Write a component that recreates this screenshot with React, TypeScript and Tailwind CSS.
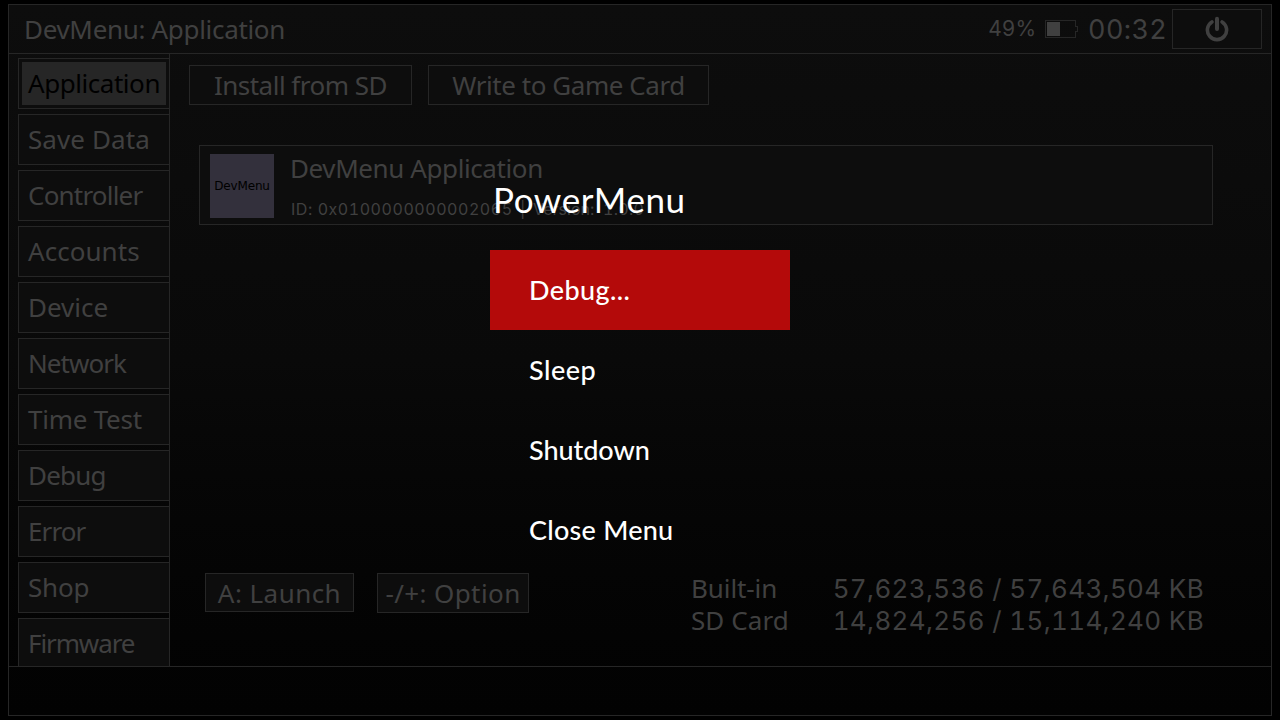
const LETTERS = "font-['Noto_Sans',sans-serif]";
const DIGITS = "font-['Inter',sans-serif] tabular-nums";
const MENU = "font-['Lato',sans-serif]";

const tabs = [
  { label: "Application", spacing: "tracking-[-0.45px]" },
  { label: "Save Data", spacing: "tracking-[0.1px]" },
  { label: "Controller", spacing: "tracking-[-0.8px]" },
  { label: "Accounts", spacing: "tracking-[0.05px]" },
  { label: "Device", spacing: "tracking-[0px]" },
  { label: "Network", spacing: "tracking-[-0.95px]" },
  { label: "Time Test", spacing: "tracking-[-0.25px]" },
  { label: "Debug", spacing: "tracking-[-0.8px]" },
  { label: "Error", spacing: "tracking-[-0.9px]" },
  { label: "Shop", spacing: "tracking-[-0.2px]" },
  { label: "Firmware", spacing: "tracking-[-1.1px]" },
];

const storage = [
  { name: "Built-in", used: "57,623,536 / 57,643,504 KB", spacing: "tracking-[-0.1px]" },
  { name: "SD Card", used: "14,824,256 / 15,114,240 KB", spacing: "tracking-[0.1px]" },
];

const menuItems = [
  { label: "Debug...", spacing: "tracking-[0.4px]" },
  { label: "Sleep", spacing: "tracking-[0.5px]" },
  { label: "Shutdown", spacing: "tracking-[-0.05px]" },
  { label: "Close Menu", spacing: "tracking-[0.25px]" },
];

function Battery() {
  return (
    <svg width="34" height="18" viewBox="0 0 34 18" fill="none" shapeRendering="crispEdges">
      <path d="M0.5 0.5H30.5V6.5H32.5V11.5H30.5V17.5H0.5Z" stroke="#262626" />
      <rect x="2" y="2" width="13" height="14" fill="#404040" />
    </svg>
  );
}

function PowerIcon() {
  return (
    <svg width="24" height="26" viewBox="0 0 24 26" fill="none" stroke="#404040">
      <path d="M6.9 5.9A9.6 9.6 0 1 0 17.1 5.9" strokeWidth="3.6" strokeLinecap="round" />
      <path d="M12 2.8V13" strokeWidth="4" strokeLinecap="round" />
    </svg>
  );
}

function Header() {
  return (
    <header className="flex h-[49px] shrink-0 items-center border-b border-[#262626] pr-[9px] pl-[15px]">
      <h1 className="flex-1 text-[26px] leading-[48px] tracking-[-0.32px]">DevMenu: Application</h1>
      <span className={`${DIGITS} mr-[9px] text-[21px] leading-[40px]`}>49%</span>
      <Battery />
      <span className={`${DIGITS} mt-px ml-[9px] w-[84px] text-[27px] leading-[48px] tracking-[0.4px]`}>00:32</span>
      <button className="flex h-10 w-[90px] items-center justify-center border border-[#262626] bg-[#0d0d0d]">
        <PowerIcon />
      </button>
    </header>
  );
}

function Sidebar() {
  return (
    <nav className="flex w-[161px] shrink-0 flex-col gap-[5px] overflow-hidden border-r border-[#262626] pt-1 pl-[9px]">
      {tabs.map((tab, i) => (
        <div key={tab.label} className="h-[51px] shrink-0 border border-r-0 border-[#262626] bg-[#0d0d0d] p-[3px]">
          <div
            className={`h-[43px] w-36 pl-[6px] text-[26px] leading-[43px] whitespace-nowrap ${tab.spacing} ${
              i === 0 ? "bg-[#262626] text-black" : ""
            }`}
          >
            {tab.label}
          </div>
        </div>
      ))}
    </nav>
  );
}

function ApplicationRow() {
  return (
    <div className="mt-10 ml-[10px] flex h-20 w-[1014px] border border-[#262626] bg-[#0d0d0d] pt-2 pl-[10px]">
      <div className="flex h-16 w-16 items-center justify-center bg-[#33303c] font-['DejaVu_Sans',sans-serif] text-[12px] leading-none tracking-[-0.15px] text-black">
        DevMenu
      </div>
      <div className="pl-[16px]">
        <div className="h-8 text-[26px] leading-[29px] tracking-[-0.4px]">DevMenu Application</div>
        <div className={`${DIGITS} flex pt-[3px] pl-px text-[16px] leading-[40px] whitespace-nowrap`}>
          <span className="w-[229px] tracking-[0.55px]">ID: 0x0100000000002065</span>
          <span className="w-[13px]">|</span>
          <span className="w-[70px]">Version:</span>
          <span className="tracking-[0.3px]">1.0.0</span>
        </div>
      </div>
    </div>
  );
}

function Content() {
  return (
    <main className="flex flex-1 flex-col pt-[11px] pl-[19px]">
      <div className="flex gap-4 text-[26px] leading-[39px]">
        <button className="h-10 w-[223px] border border-[#262626] bg-[#0d0d0d] tracking-[-0.5px]">Install from SD</button>
        <button className="h-10 w-[281px] border border-[#262626] bg-[#0d0d0d] tracking-[-0.45px]">Write to Game Card</button>
      </div>
      <ApplicationRow />
      <div className="mt-auto flex h-[93px] pl-4 text-[26px]">
        <button className="h-[39px] w-[149px] border border-[#262626] bg-[#0d0d0d] leading-[38px] tracking-[0.45px]">
          A: Launch
        </button>
        <button className="ml-[23px] h-10 w-[152px] border border-[#262626] bg-[#0d0d0d] leading-[38px] tracking-[0.4px]">
          -/+: Option
        </button>
        <div className="ml-[161px] leading-8">
          {storage.map((s) => (
            <div key={s.name} className="flex h-8">
              <span className={`w-[142px] pl-px leading-[31px] ${s.spacing}`}>{s.name}</span>
              <span className={`${DIGITS} w-[372px] text-right tracking-[0.34px] whitespace-nowrap`}>{s.used}</span>
            </div>
          ))}
        </div>
      </div>
    </main>
  );
}

function PowerMenu() {
  return (
    <div className={`${MENU} absolute top-[175px] left-[490px] w-[300px] text-white`}>
      <h2 className="h-[75px] pl-[3px] text-[35px] leading-[49px] tracking-[0.6px]">PowerMenu</h2>
      {menuItems.map((item, i) => (
        <div
          key={item.label}
          className={`h-20 pl-[39px] text-[27px] leading-[80px] font-medium ${item.spacing} ${i === 0 ? "bg-[#b40a0a]" : ""}`}
        >
          {item.label}
        </div>
      ))}
    </div>
  );
}

export default function App() {
  return (
    <div className={`${LETTERS} relative h-[720px] w-[1280px] overflow-hidden bg-black px-2 py-1 text-[#404040]`}>
      <div className="flex h-[712px] flex-col border border-[#262626] bg-linear-to-b from-[#0d0d0d] via-[#090909] to-[#020202]">
        <Header />
        <div className="flex h-[612px] shrink-0">
          <Sidebar />
          <Content />
        </div>
        <footer className="flex-1 border-t border-[#262626]" />
      </div>
      <PowerMenu />
    </div>
  );
}
